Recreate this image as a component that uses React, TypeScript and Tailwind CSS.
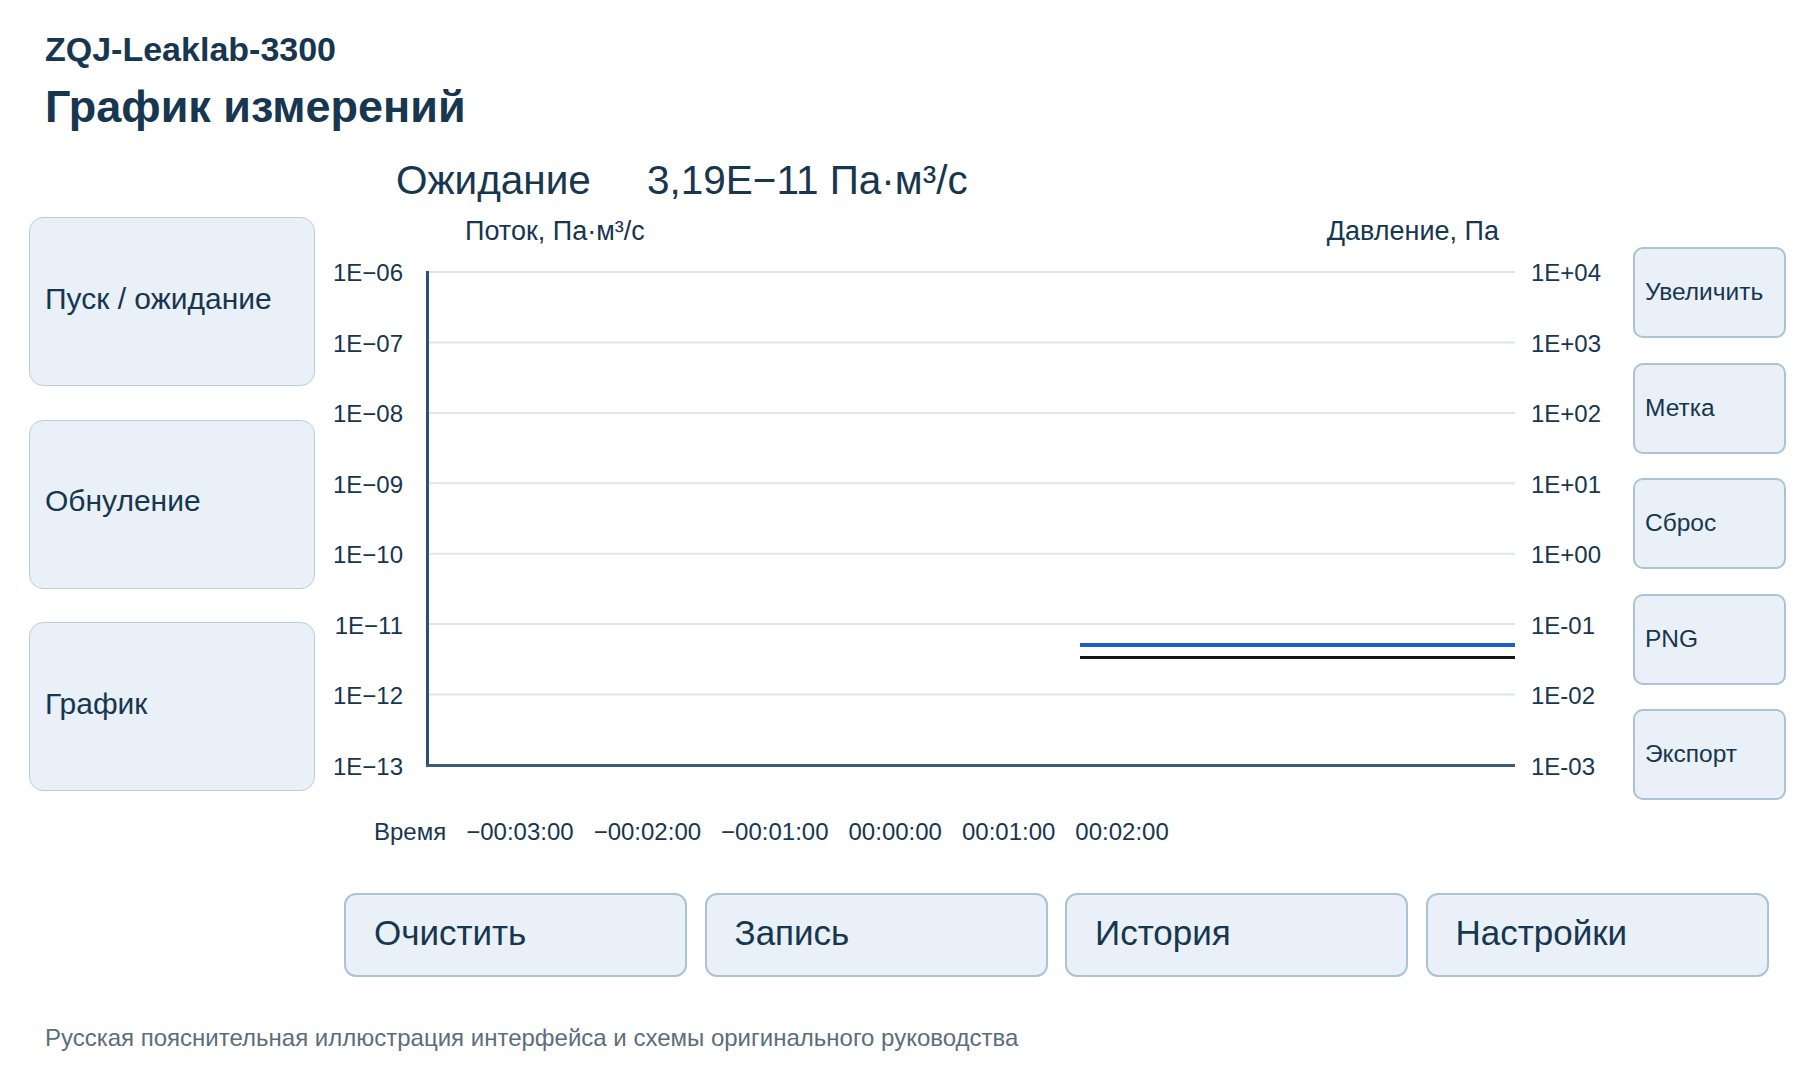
import React from "react";

const leftLabels = ["1E−06", "1E−07", "1E−08", "1E−09", "1E−10", "1E−11", "1E−12", "1E−13"];
const rightLabels = ["1E+04", "1E+03", "1E+02", "1E+01", "1E+00", "1E-01", "1E-02", "1E-03"];
const times = ["Время", "−00:03:00", "−00:02:00", "−00:01:00", "00:00:00", "00:01:00", "00:02:00"];

function Chart() {
  const ys = [1, 71.4, 141.9, 212.3, 282.7, 353.1, 423.6, 494];
  return (
    <svg width="1090" height="497" viewBox="0 0 1090 497" className="block">
      {ys.slice(0, 7).map((y, i) => (
        <line key={i} x1="4" y1={y} x2="1090" y2={y} stroke="#dde6ee" strokeWidth="2" />
      ))}
      <line x1="2.5" y1="0" x2="2.5" y2="496" stroke="#2f5171" strokeWidth="3" />
      <line x1="1" y1="494.5" x2="1090" y2="494.5" stroke="#3a5c7a" strokeWidth="3" />
      <line x1="655" y1="374" x2="1090" y2="374" stroke="#1f5ec6" strokeWidth="4" />
      <line x1="655" y1="386.5" x2="1090" y2="386.5" stroke="#151515" strokeWidth="3" />
    </svg>
  );
}

export default function App() {
  const font = { fontFamily: '"Liberation Sans", Arial, sans-serif' };
  return (
    <div className="w-[1800px] h-[1080px] bg-white text-[#17364f] overflow-hidden" style={font}>
      {/* header */}
      <div className="pl-[45px] pt-[32px]">
        <div className="text-[34px] leading-none font-bold">ZQJ-Leaklab-3300</div>
        <div className="text-[45px] leading-none font-bold mt-[18px]">График измерений</div>
      </div>

      {/* middle */}
      <div className="flex items-start pl-[29px] mt-[31px]">
        {/* left buttons */}
        <div className="flex flex-col gap-[33.5px] mt-[57px] w-[286px]">
          {["Пуск / ожидание", "Обнуление", "График"].map((t) => (
            <div
              key={t}
              className="h-[169px] rounded-[14px] border-[1.5px] border-[#b9cfe0] bg-[#e9f0f7] flex items-center pl-[15px] pb-[6px] text-[30px] leading-none"
            >
              {t}
            </div>
          ))}
        </div>

        {/* center */}
        <div className="w-[1318px] flex flex-col">
          <div className="flex items-baseline pl-[81px] text-[40.5px] leading-none h-[41px]">
            <span>Ожидание</span>
            <span className="ml-[56px]">3,19E−11 Па·м³/с</span>
          </div>
          <div className="flex justify-between pl-[150px] pr-[134px] mt-[17px] text-[27px] leading-none">
            <span>Поток, Па·м³/с</span>
            <span>Давление, Па</span>
          </div>
          <div className="flex items-start mt-[14px]">
            <div className="w-[88px] h-[518px] mt-[2px] flex flex-col justify-between items-end text-[24px] leading-none">
              {leftLabels.map((l) => (
                <span key={l}>{l}</span>
              ))}
            </div>
            <div className="ml-[22px] mt-[12px]">
              <Chart />
            </div>
            <div className="ml-[16px] h-[518px] mt-[2px] flex flex-col justify-between text-[24px] leading-none">
              {rightLabels.map((l) => (
                <span key={l}>{l}</span>
              ))}
            </div>
          </div>
          <div className="flex gap-[20px] pl-[59px] mt-[41px] text-[24px] leading-none">
            {times.map((t) => (
              <span key={t}>{t}</span>
            ))}
          </div>
        </div>

        {/* right buttons */}
        <div className="flex flex-col gap-[24.5px] mt-[87px] w-[153px]">
          {["Увеличить", "Метка", "Сброс", "PNG", "Экспорт"].map((t) => (
            <div
              key={t}
              className="h-[91px] rounded-[10px] border-2 border-[#abc3d6] bg-[#e9f0f7] flex items-center pl-[10px] text-[24.5px] leading-none"
            >
              {t}
            </div>
          ))}
        </div>
      </div>

      {/* bottom buttons */}
      <div className="flex gap-[17.5px] pl-[344px] mt-[49px]">
        {["Очистить", "Запись", "История", "Настройки"].map((t) => (
          <div
            key={t}
            className="w-[343px] h-[84px] rounded-[12px] border-2 border-[#abc3d6] bg-[#e9f0f7] flex items-center pl-[28px] pb-[5px] text-[35px] leading-none"
          >
            {t}
          </div>
        ))}
      </div>

      {/* footer */}
      <div className="pl-[45px] mt-[49px] text-[24px] leading-none text-[#5c6d7d]">
        Русская пояснительная иллюстрация интерфейса и схемы оригинального руководства
      </div>
    </div>
  );
}
